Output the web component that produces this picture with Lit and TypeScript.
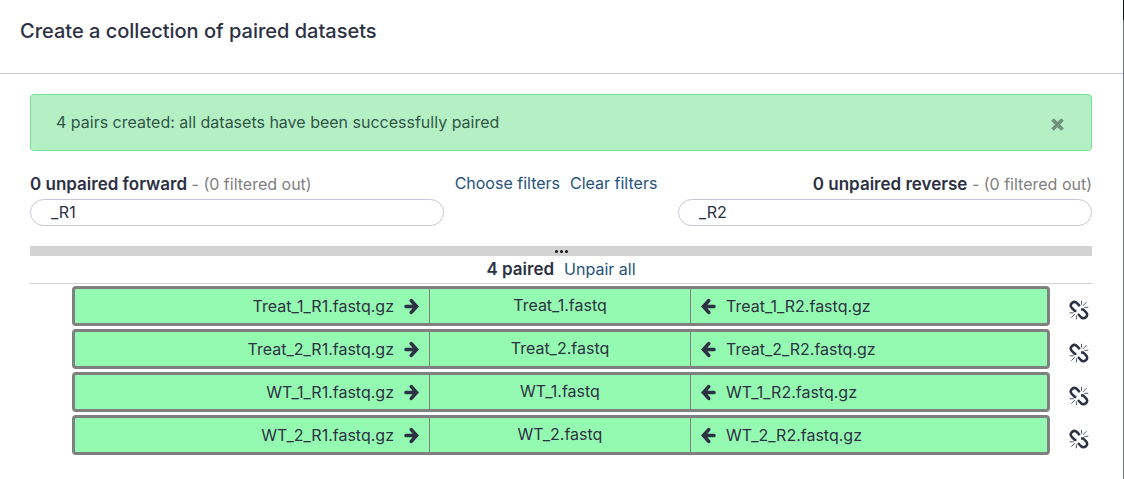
import { LitElement, html, css } from "lit";
import { customElement, property, state } from "lit/decorators.js";

interface Pair {
  forward: string;
  name: string;
  reverse: string;
}

const arrowRight = html`<svg class="arrow" viewBox="0 0 15 17" aria-hidden="true">
  <path d="M2 8.500H11M7.300 2.600 12.600 8.500 7.300 14.400" />
</svg>`;

const arrowLeft = html`<svg class="arrow" viewBox="0 0 15 17" aria-hidden="true">
  <path d="M13 8.500H4M7.700 2.600 2.400 8.500 7.700 14.400" />
</svg>`;

const brokenLink = html`<svg class="unlink" viewBox="0 0 20 20" aria-hidden="true">
  <g fill="none" stroke="currentColor">
    <path stroke-width="2.500" d="M10.800 6.200 8 3.200C6.600 1.700 4.600 1.600 3 3 1.400 4.500 1.400 6.400 2.800 7.900L5.600 10.700 7.400 10.900" />
    <path stroke-width="2.500" d="M12 9.400 14.200 9.400 17.100 12.300C18.600 13.900 18.500 15.800 16.900 17.200 15.300 18.600 13.300 18.500 11.800 17L9 14" />
    <path stroke-width=".8" d="M12.500.8V4.700M17.500 2.200 13.900 5.900M19.300 7.300H15.300M.6 12.800H4.700M2.300 17.700 6 14.100M7.400 15.300V19.300" />
  </g>
</svg>`;

@customElement("pair-row")
export class PairRow extends LitElement {
  @property({ attribute: false }) pair!: Pair;

  static styles = css`
    :host {
      display: flex;
      align-items: center;
      font-family: inherit;
    }
    .pair {
      flex: 1;
      box-sizing: border-box;
      height: 40px;
      display: grid;
      grid-template-columns: 354fr 262fr 356fr;
      border: 3px solid #808080;
      border-radius: 4px;
      background: #95fab1;
      line-height: 34px;
      white-space: nowrap;
    }
    .forward,
    .reverse {
      display: flex;
      align-items: center;
      padding: 0 10px;
      gap: 10px;
    }
    .forward {
      justify-content: flex-end;
    }
    .name {
      text-align: center;
      line-height: 32px;
      border: solid #808080;
      border-width: 0 1px;
    }
    .arrow {
      width: 15px;
      height: 17px;
      fill: none;
      stroke: currentColor;
      stroke-width: 3.6px;
      stroke-linecap: round;
    }
    .unlink {
      display: block;
      width: 20px;
      height: 20px;
    }
    button {
      margin: 8px 3px 0 19px;
      padding: 0;
      border: 0;
      background: none;
      color: inherit;
      cursor: pointer;
    }
  `;

  render() {
    return html`
      <div class="pair">
        <span class="forward"><span>${this.pair.forward}</span>${arrowRight}</span>
        <span class="name">${this.pair.name}</span>
        <span class="reverse">${arrowLeft}<span>${this.pair.reverse}</span></span>
      </div>
      <button type="button" aria-label="Unpair" @click=${() => this.dispatchEvent(new CustomEvent("unpair"))}>
        ${brokenLink}
      </button>
    `;
  }
}

@customElement("app-root")
export class AppRoot extends LitElement {
  @state() private pairs: Pair[] = ["Treat_1", "Treat_2", "WT_1", "WT_2"].map((n) => ({
    forward: `${n}_R1.fastq.gz`,
    name: `${n}.fastq`,
    reverse: `${n}_R2.fastq.gz`,
  }));

  static styles = css`
    :host {
      display: block;
      box-sizing: border-box;
      min-height: 100vh;
      border-right: 1px solid;
      border-image: linear-gradient(#10121c 21px, #71737d 21px) 1;
      background: #fff;
      color: #2c3143;
      font-family: Inter, "Liberation Sans", sans-serif;
      font-size: 16px;
      line-height: 24px;
    }
    header {
      padding: 19px 20px 30px;
      border-bottom: 1px solid #c8c7d6;
    }
    h1 {
      margin: 0;
      font-size: 20px;
      font-weight: 500;
      line-height: 24px;
    }
    main {
      padding: 20px 31px 20px 30px;
    }
    .alert {
      display: flex;
      align-items: center;
      justify-content: space-between;
      padding: 16px 26px 16px 25px;
      min-height: 23px;
      border: 1px solid #74e293;
      border-radius: 4px;
      background: #b5f0c5;
      color: #305646;
      line-height: 23px;
    }
    .close {
      display: block;
      padding: 4px 0 0;
      border: 0;
      background: none;
      color: #71917f;
      cursor: pointer;
    }
    .close svg {
      display: block;
      width: 15px;
      height: 15px;
    }
    .columns {
      display: grid;
      grid-template-columns: 39fr 22fr 39fr;
      margin-top: 20px;
    }
    .columns label {
      display: block;
      padding-top: 1px;
      white-space: nowrap;
    }
    .right label {
      text-align: right;
    }
    .muted {
      color: #808080;
    }
    .links {
      display: flex;
      justify-content: center;
      gap: 10px;
      padding-right: 10px;
      white-space: nowrap;
    }
    a {
      color: #25537b;
      text-decoration: none;
    }
    b {
      font-size: 17px;
      font-weight: 600;
    }
    input {
      display: block;
      box-sizing: border-box;
      width: 100%;
      height: 27px;
      margin: 3px 0 0;
      padding: 0 20px 2px;
      border: 1px solid #c8c7d9;
      border-radius: 14px;
      background: #fff;
      color: inherit;
      font: inherit;
      outline: none;
    }
    .handle {
      display: flex;
      justify-content: center;
      align-items: center;
      gap: 2px;
      box-sizing: border-box;
      height: 10px;
      margin-top: 20px;
      padding-top: 1px;
      background: #d3d3d3;
    }
    .handle i {
      width: 3px;
      height: 3px;
      border-radius: 2px;
      background: #111;
    }
    .paired {
      display: flex;
      justify-content: center;
      gap: 10px;
      padding: 1px 0 2px;
      border-bottom: 1px solid #d3d3d3;
    }
    .rows {
      display: grid;
      gap: 3px;
      padding: 2px 0 0 42px;
    }
  `;

  private clear(e: Event) {
    e.preventDefault();
  }

  render() {
    return html`
      <header><h1>Create a collection of paired datasets</h1></header>
      <main>
        <div class="alert" role="status">
          <span>4 pairs created: all datasets have been successfully paired</span>
          <button class="close" type="button" aria-label="Close">
            <svg viewBox="0 0 15 15" aria-hidden="true">
              <path d="M2.500 2.500 12.500 12.500M12.500 2.500 2.500 12.500" stroke="currentColor" stroke-width="3.800" />
            </svg>
          </button>
        </div>
        <div class="columns">
          <div class="left">
            <label for="fwd"><b>0 unpaired forward</b> <span class="muted">- (0 filtered out)</span></label>
            <input id="fwd" type="text" .value=${"_R1"} />
          </div>
          <div class="links">
            <a href="#choose" @click=${this.clear}>Choose filters</a>
            <a href="#clear" @click=${this.clear}>Clear filters</a>
          </div>
          <div class="right">
            <label for="rev"><b>0 unpaired reverse</b> <span class="muted">- (0 filtered out)</span></label>
            <input id="rev" type="text" .value=${"_R2"} />
          </div>
        </div>
        <div class="handle"><i></i><i></i><i></i></div>
        <div class="paired">
          <b>${this.pairs.length} paired</b>
          <a href="#unpair" @click=${this.clear}>Unpair all</a>
        </div>
        <div class="rows">
          ${this.pairs.map(
            (p) => html`<pair-row
              .pair=${p}
              @unpair=${() => (this.pairs = this.pairs.filter((x) => x !== p))}
            ></pair-row>`,
          )}
        </div>
      </main>
    `;
  }
}
